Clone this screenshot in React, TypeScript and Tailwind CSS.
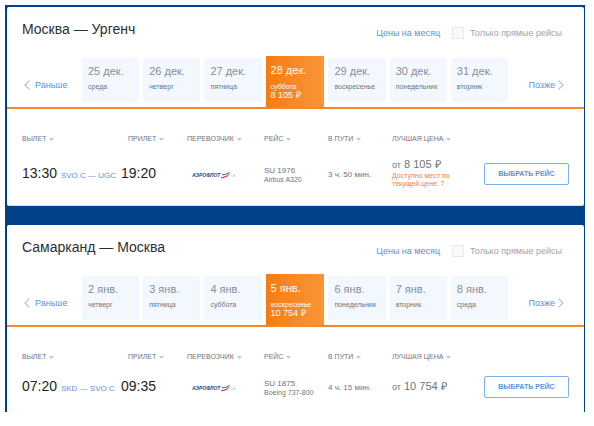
interface DayTab {
  date: string
  weekday: string
  price?: string
}

interface Flight {
  departure: string
  route: string
  arrival: string
  number: string
  aircraft: string
  duration: string
  price: string
  seatsNote?: string
}

interface Leg {
  id: string
  title: string
  days: DayTab[]
  flight: Flight
}

const LEGS: Leg[] = [
  {
    id: 'outbound',
    title: 'Москва — Ургенч',
    days: [
      { date: '25 дек.', weekday: 'среда' },
      { date: '26 дек.', weekday: 'четверг' },
      { date: '27 дек.', weekday: 'пятница' },
      { date: '28 дек.', weekday: 'суббота', price: '8 105' },
      { date: '29 дек.', weekday: 'воскресенье' },
      { date: '30 дек.', weekday: 'понедельник' },
      { date: '31 дек.', weekday: 'вторник' },
    ],
    flight: {
      departure: '13:30',
      route: 'SVO C — UGC',
      arrival: '19:20',
      number: 'SU 1976',
      aircraft: 'Airbus A320',
      duration: '3 ч. 50 мин.',
      price: '8 105',
      seatsNote: 'Доступно мест по текущей цене: 7',
    },
  },
  {
    id: 'inbound',
    title: 'Самарканд — Москва',
    days: [
      { date: '2 янв.', weekday: 'четверг' },
      { date: '3 янв.', weekday: 'пятница' },
      { date: '4 янв.', weekday: 'суббота' },
      { date: '5 янв.', weekday: 'воскресенье', price: '10 754' },
      { date: '6 янв.', weekday: 'понедельник' },
      { date: '7 янв.', weekday: 'вторник' },
      { date: '8 янв.', weekday: 'среда' },
    ],
    flight: {
      departure: '07:20',
      route: 'SKD — SVO C',
      arrival: '09:35',
      number: 'SU 1875',
      aircraft: 'Boeing 737-800',
      duration: '4 ч. 15 мин.',
      price: '10 754',
    },
  },
]

const COLUMNS = [
  { label: 'Вылет', className: 'w-[99px]' },
  { label: 'Прилет', className: 'w-[66px] pl-[7px]' },
  { label: 'Перевозчик', className: 'w-[77px]' },
  { label: 'Рейс', className: 'w-16' },
  { label: 'В пути', className: 'w-16' },
  { label: 'Лучшая цена', className: 'w-[92px]' },
]

function Chevron({ direction }: { direction: 'left' | 'right' }) {
  return (
    <svg width="6" height="10" viewBox="0 0 6 10" fill="none" stroke="#b9bec4" strokeWidth="1.2">
      <path d={direction === 'left' ? 'M5.4 0.6 1 5l4.4 4.4' : 'M0.6 0.6 5 5 0.6 9.4'} />
    </svg>
  )
}

function CarrierLogo() {
  return (
    <svg
      role="img"
      aria-label="Аэрофлот"
      className="ml-[5px]"
      width="44"
      height="8"
      viewBox="0 0 44 8"
    >
      <text
        x="0"
        y="6"
        fontSize="5"
        fontWeight="700"
        fontStyle="italic"
        fontFamily="Liberation Sans, sans-serif"
        fill="#1c4a86"
      >
        АЭРОФЛОТ
      </text>
      <path d="M30 3.200c3 .2 6-.8 8.500-2.600-1.500 2.400-4.500 3.800-8.500 3.600z" fill="#2b5796" />
      <path d="M29 6.200c3.500-.2 6.500-1.600 9-4.200-1.200 3-4.500 5.400-9 5.200z" fill="#dc3346" />
      <path d="M40.400 6 42 3.400 43.400 6M41 5h2" stroke="#b4bfcc" strokeWidth=".6" fill="none" />
    </svg>
  )
}

function DayButton({ day }: { day: DayTab }) {
  if (day.price) {
    return (
      <button
        type="button"
        aria-pressed="true"
        className="flex h-[51px] flex-[60] flex-col bg-linear-to-r from-[#f57c0c] to-[#f99537] pt-1.5 pl-[5px] text-left text-white"
      >
        <span className="text-[11px] leading-4">{day.date}</span>
        <span className="pt-1 text-[7px] leading-[9px]">{day.weekday}</span>
        <span className="text-[9px] leading-[9px]">{day.price} ₽</span>
      </button>
    )
  }

  return (
    <button
      type="button"
      className="mb-[5px] flex h-11 flex-[57] flex-col bg-[#f3f8ff] pt-[5px] pl-[6px] text-left text-[#868e96]"
    >
      <span className="text-[11px] leading-4">{day.date}</span>
      <span className="pt-[3px] text-[7px] leading-[9px] text-[#6b7581]">{day.weekday}</span>
    </button>
  )
}

function FlightTable({ flight }: { flight: Flight }) {
  return (
    <table className="w-full table-fixed text-left text-[#6b7581]">
      <thead>
        <tr className="align-top">
          {COLUMNS.map((column) => (
            <th key={column.label} scope="col" className={`font-normal ${column.className}`}>
              <button
                type="button"
                className="flex items-center gap-[3px] text-[7px] leading-[10px] whitespace-nowrap uppercase"
              >
                {column.label}
                <svg width="5" height="3" viewBox="0 0 5 3" fill="#c3c8cd">
                  <path d="M0 0h5L2.500 3z" />
                </svg>
              </button>
            </th>
          ))}
          <th aria-label="Выбор рейса" />
        </tr>
      </thead>
      <tbody>
        <tr className={flight.seatsNote ? 'h-14' : 'h-[46px]'}>
          <td className="pt-0.5 text-sm whitespace-nowrap">
            <span className="text-[#1f2326]">{flight.departure}</span>{' '}
            <a href="#route" className="text-[8px] text-[#5b92dd]">
              {flight.route}
            </a>
          </td>
          <td className="pt-0.5 text-sm text-[#1f2326]">{flight.arrival}</td>
          <td className="pt-1.5">
            <CarrierLogo />
          </td>
          <td className="pt-1.5 whitespace-nowrap">
            <div className="text-[8px] leading-[9px]">{flight.number}</div>
            <div className="text-[7px] leading-[9px]">{flight.aircraft}</div>
          </td>
          <td className="pt-1.5 text-[8px] whitespace-nowrap">{flight.duration}</td>
          <td className="pt-0.5">
            <div className="text-[11px] leading-3 whitespace-nowrap">
              <span className="text-[9px]">от</span> {flight.price} ₽
            </div>
            {flight.seatsNote && (
              <div className="w-[66px] pt-px text-[7px] leading-2 text-[#f5821f]">{flight.seatsNote}</div>
            )}
          </td>
          <td>
            <button
              type="button"
              className="h-[22px] w-full rounded-xs border border-[#7fb2ec] text-[7px] font-bold whitespace-nowrap text-[#5b92dd] uppercase"
            >
              Выбрать рейс
            </button>
          </td>
        </tr>
      </tbody>
    </table>
  )
}

function LegCard({ leg }: { leg: Leg }) {
  const checkboxId = `direct-${leg.id}`

  return (
    <section className="rounded-t-xs bg-white not-last:rounded-b-xs not-last:border-b not-last:border-[#d5dde8]">
      <header className="flex items-start pt-3 pr-[22px] pl-[15px]">
        <h2 className="flex-1 text-sm leading-5 text-[#2b2f33]">{leg.title}</h2>
        <div className="flex items-center pt-2 text-[9px] leading-3">
          <a href="#month" className="text-[#5b92dd]">
            Цены на месяц
          </a>
          <input
            id={checkboxId}
            type="checkbox"
            className="ml-3 size-3 appearance-none border border-[#e9e9e9] bg-[#f9f9f9]"
          />
          <label htmlFor={checkboxId} className="ml-1.5 text-[#a0a4a8]">
            Только прямые рейсы
          </label>
        </div>
      </header>

      <nav className="mt-[17px] flex items-end border-b-2 border-[#f5882a]">
        <button
          type="button"
          className="mb-4 ml-[17px] flex w-[58px] items-center gap-[5px] text-[9px] leading-3 text-[#5b92dd]"
        >
          <Chevron direction="left" />
          Раньше
        </button>
        <div className="flex flex-1 items-end gap-1">
          {leg.days.map((day) => (
            <DayButton key={day.date} day={day} />
          ))}
        </div>
        <button
          type="button"
          className="mr-5 mb-4 flex w-14 items-center justify-end gap-[3px] text-[9px] leading-3 text-[#5b92dd]"
        >
          Позже
          <Chevron direction="right" />
        </button>
      </nav>

      <div className={`px-[15px] pt-[25px] ${leg.flight.seatsNote ? 'pb-[5px]' : 'pb-1'}`}>
        <FlightTable flight={leg.flight} />
      </div>
    </section>
  )
}

export default function App() {
  return (
    <div className="bg-white p-[5px] pr-[9px] font-['Liberation_Sans',Arial,sans-serif]">
      <main className="flex flex-col gap-[19px] bg-[#00428a] pt-0.5 pr-px pl-0.5">
        {LEGS.map((leg) => (
          <LegCard key={leg.id} leg={leg} />
        ))}
      </main>
    </div>
  )
}
